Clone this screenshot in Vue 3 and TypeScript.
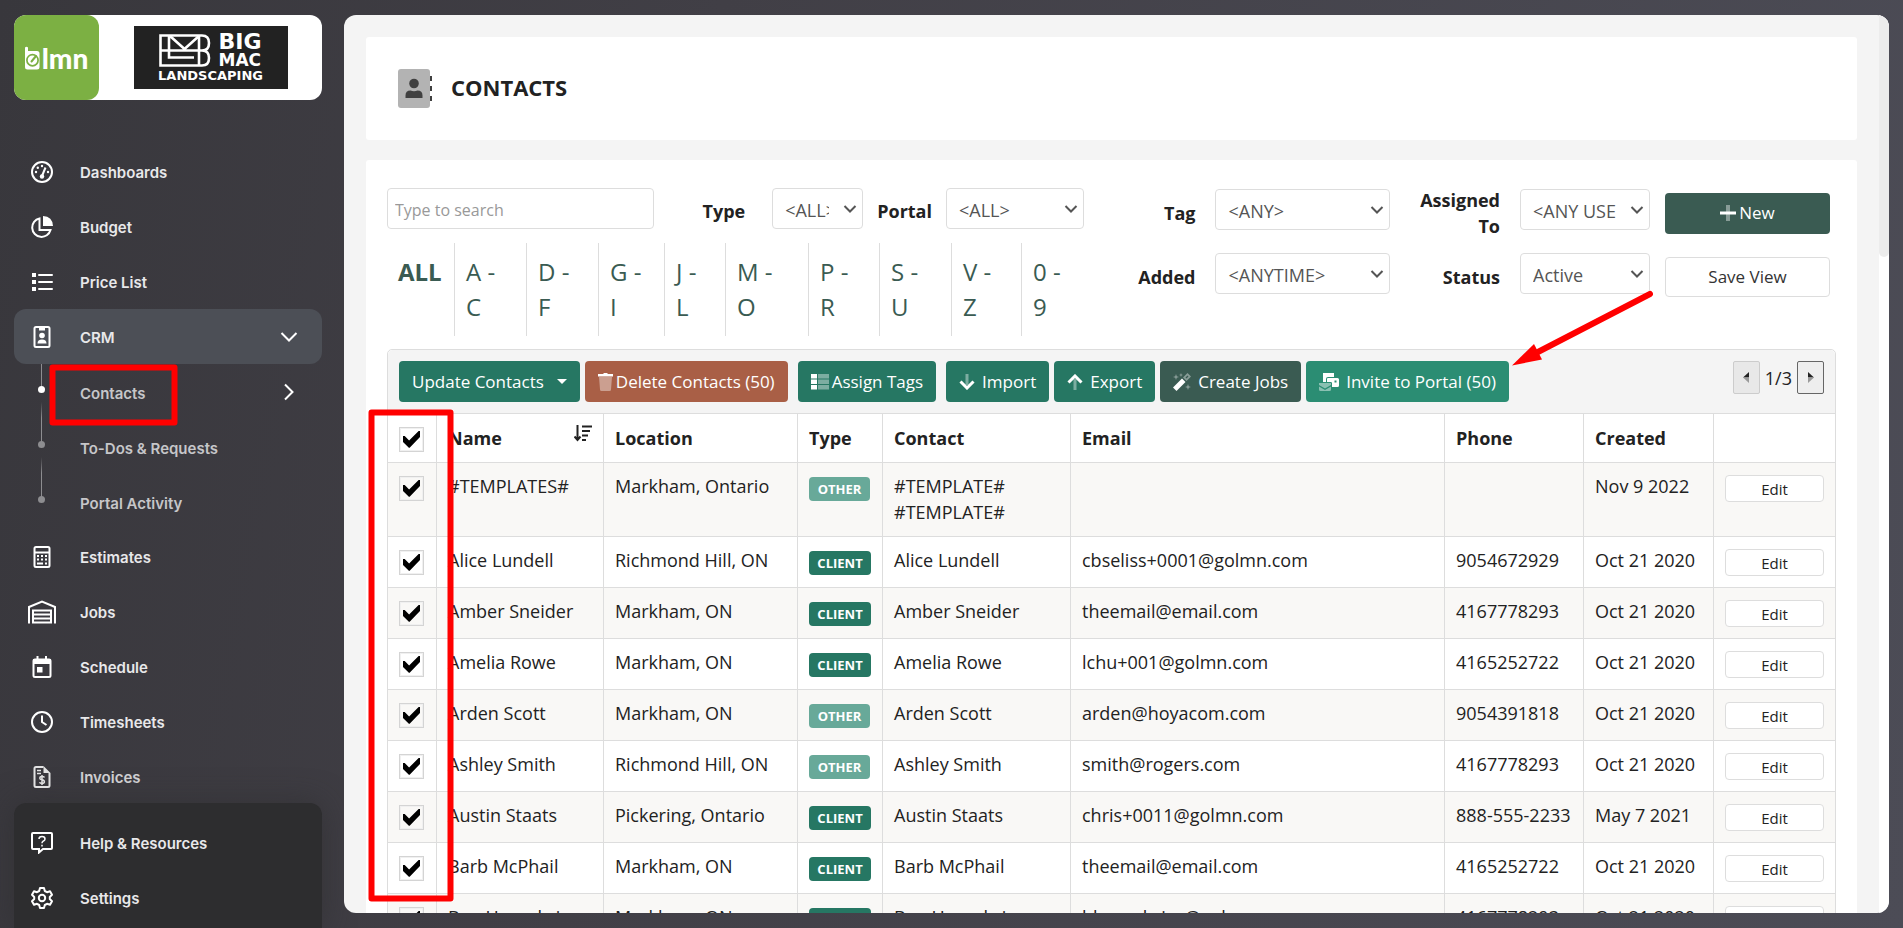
<script setup lang="ts">
import { computed, ref } from 'vue'

interface Contact {
  id: number
  name: string
  location: string
  type: 'OTHER' | 'CLIENT'
  contact: string[]
  email: string
  phone: string
  created: string
}

const contacts: Contact[] = [
  { id: 1, name: '#TEMPLATES#', location: 'Markham, Ontario', type: 'OTHER', contact: ['#TEMPLATE#', '#TEMPLATE#'], email: '', phone: '', created: 'Nov 9 2022' },
  { id: 2, name: 'Alice Lundell', location: 'Richmond Hill, ON', type: 'CLIENT', contact: ['Alice Lundell'], email: 'cbseliss+0001@golmn.com', phone: '9054672929', created: 'Oct 21 2020' },
  { id: 3, name: 'Amber Sneider', location: 'Markham, ON', type: 'CLIENT', contact: ['Amber Sneider'], email: 'theemail@email.com', phone: '4167778293', created: 'Oct 21 2020' },
  { id: 4, name: 'Amelia Rowe', location: 'Markham, ON', type: 'CLIENT', contact: ['Amelia Rowe'], email: 'lchu+001@golmn.com', phone: '4165252722', created: 'Oct 21 2020' },
  { id: 5, name: 'Arden Scott', location: 'Markham, ON', type: 'OTHER', contact: ['Arden Scott'], email: 'arden@hoyacom.com', phone: '9054391818', created: 'Oct 21 2020' },
  { id: 6, name: 'Ashley Smith', location: 'Richmond Hill, ON', type: 'OTHER', contact: ['Ashley Smith'], email: 'smith@rogers.com', phone: '4167778293', created: 'Oct 21 2020' },
  { id: 7, name: 'Austin Staats', location: 'Pickering, Ontario', type: 'CLIENT', contact: ['Austin Staats'], email: 'chris+0011@golmn.com', phone: '888-555-2233', created: 'May 7 2021' },
  { id: 8, name: 'Barb McPhail', location: 'Markham, ON', type: 'CLIENT', contact: ['Barb McPhail'], email: 'theemail@email.com', phone: '4165252722', created: 'Oct 21 2020' },
  { id: 9, name: 'Ben Humphries', location: 'Markham, ON', type: 'CLIENT', contact: ['Ben Humphries'], email: 'bhumphries@golmn.com', phone: '4167778293', created: 'Oct 21 2020' },
]

const selected = ref<number[]>(contacts.map((c) => c.id))
const allSelected = computed({
  get: () => selected.value.length === contacts.length,
  set: (on: boolean) => {
    selected.value = on ? contacts.map((c) => c.id) : []
  },
})

const letters: [string, string][] = [
  ['A -', 'C'], ['D -', 'F'], ['G -', 'I'], ['J -', 'L'], ['M -', 'O'],
  ['P -', 'R'], ['S -', 'U'], ['V -', 'Z'], ['0 -', '9'],
]
const search = ref('')
</script>

<template>
  <div class="app">
    <aside class="sidebar">
      <div class="brand">
        <div class="lmn">
          <svg width="15" height="24" viewBox="0 0 15 24" aria-hidden="true">
            <path d="M0 1.500Q1.500 0 3 1.500V5H12Q14.500 5 14.500 7.500V21Q14.500 23.500 12 23.500H2.500Q0 23.500 0 21Z" fill="#fff" />
            <circle cx="7.500" cy="14.200" r="5.600" fill="none" stroke="#7cb043" stroke-width="1.700" />
            <path d="M6.500 15.500L11 10" stroke="#7cb043" stroke-width="2" stroke-linecap="round" />
          </svg>
          <span>lmn</span>
        </div>
        <div class="company-box">
          <div class="company">
            <div class="company-top">
              <svg width="52" height="33" viewBox="0 0 52 33" fill="none" stroke="#fff" stroke-width="2.600" aria-hidden="true">
                <path d="M1.500 1.500H43Q50 1.500 50 9Q50 16.500 43 16.500Q50 16.500 50 24Q50 31.500 43 31.500H1.500Z" />
                <path d="M10 1.500V23.500H35M1.500 16.500H10M10 16.500H43M11 2L25.500 15L40 2M40 1.500V31.500" />
              </svg>
              <div class="company-words"><span class="big">BIG</span><span class="mac">MAC</span></div>
            </div>
            <span class="land">LANDSCAPING</span>
          </div>
        </div>
      </div>

      <nav class="nav">
        <a href="#" class="item">
          <svg viewBox="0 0 22 22"><circle cx="11" cy="11" r="10" class="s" /><circle cx="5" cy="11" r="1.200" /><circle cx="6.800" cy="6.800" r="1.200" /><circle cx="11" cy="5" r="1.200" /><circle cx="17" cy="11" r="1.200" /><circle cx="11" cy="15.500" r="2.200" /><path d="M11 15L14.500 6.500" class="s" /></svg>
          <span>Dashboards</span>
        </a>
        <a href="#" class="item">
          <svg viewBox="0 0 22 22"><path d="M8.500 2.500A9.300 9.300 0 1 0 19.500 14H8.500Z" class="s" /><path d="M12 0Q21.500 .5 22 10H12Z" /></svg>
          <span>Budget</span>
        </a>
        <a href="#" class="item">
          <svg viewBox="0 0 22 22"><path d="M1 2H5V6H1ZM1 9H5V13H1ZM1 16H5V20H1Z" /><path d="M8 4H21M8 11H21M8 18H21" class="s r" /></svg>
          <span>Price List</span>
        </a>
        <a href="#" class="item active">
          <svg viewBox="0 0 22 22"><rect x="3.500" y="1" width="15" height="20" rx="1.500" class="s" /><path d="M8 2H14V4.500H8Z" /><circle cx="11" cy="9.500" r="2.800" /><path d="M6.500 17.500Q6.500 13.500 11 13.500T15.500 17.500Z" /></svg>
          <span>CRM</span>
          <svg class="chev" viewBox="0 0 18 18"><path d="M1.500 5L9 12.500L16.500 5" class="s" /></svg>
        </a>
        <div class="subs">
          <a href="#" class="sub current">Contacts
            <svg class="chev" viewBox="0 0 18 18"><path d="M5 1.500L12.500 9L5 16.500" class="s" /></svg>
          </a>
          <a href="#" class="sub">To-Dos &amp; Requests</a>
          <a href="#" class="sub">Portal Activity</a>
        </div>
        <a href="#" class="item">
          <svg viewBox="0 0 22 22"><rect x="3.500" y="1" width="15" height="20" rx="1.500" class="s" /><path d="M4 6.500H18" class="s" /><path d="M6 9H8V11H6ZM10 9H12V11H10ZM14 9H16V11H14ZM6 12.500H8V14.500H6ZM10 12.500H12V14.500H10ZM14 12.500H16V14.500H14ZM6 16.500H12V18.500H6ZM14 16.500H16V18.500H14Z" /></svg>
          <span>Estimates</span>
        </a>
        <a href="#" class="item">
          <svg class="wide" viewBox="0 0 28 24"><path d="M1 23.500V7L14 1.500L27 7V23.500M5 23.500V10.500H23V23.500M6 14.500H22M6 18.500H22M6 22.500H22" class="s" /></svg>
          <span>Jobs</span>
        </a>
        <a href="#" class="item">
          <svg viewBox="0 0 22 22"><rect x="2.500" y="3.500" width="17" height="17.500" rx="1.500" class="s" /><path d="M2 3H20V8H2ZM5.500 0H7.500V3H5.500ZM14 0H16V3H14ZM6 11H11.500V16.500H6Z" /></svg>
          <span>Schedule</span>
        </a>
        <a href="#" class="item">
          <svg viewBox="0 0 22 22"><circle cx="11" cy="11" r="10" class="s" /><path d="M11 4.500V11L15.500 14" class="s" /></svg>
          <span>Timesheets</span>
        </a>
        <a href="#" class="item dim">
          <svg viewBox="0 0 22 22"><path d="M12.500 1H5Q3.500 1 3.500 2.500V19.500Q3.500 21 5 21H17Q18.500 21 18.500 19.500V7" class="s" /><path d="M12.500 0L19.500 7H12.500Z" /><path d="M6 4.500H10M6 7.500H10" class="t" /><path d="M13.500 11.500Q13 10.500 11 10.500Q8.800 10.500 8.800 12.200Q8.800 13.500 11 13.800Q13.400 14.200 13.400 15.700Q13.400 17.300 11 17.300Q9 17.300 8.500 16.200M11 9V19" class="t" /></svg>
          <span>Invoices</span>
        </a>
      </nav>

      <div class="foot">
        <a href="#" class="item">
          <svg viewBox="0 0 22 22"><path d="M2 1H20Q21 1 21 2V16Q21 17 20 17H12L8 20.500V17H2Q1 17 1 16V2Q1 1 2 1Z" class="s" /><path d="M8 7Q8 4.500 11 4.500T14 7Q14 8.500 12 9.300Q11 9.800 11 11.200M11 12.700V14.500" class="t" /></svg>
          <span>Help &amp; Resources</span>
        </a>
        <a href="#" class="item">
          <svg viewBox="0 0 22 22"><path d="M9 1H13L13.800 4L16 5.200L19 4.300L21 7.800L18.800 10V12L21 14.200L19 17.700L16 16.800L13.800 18L13 21H9L8.200 18L6 16.800L3 17.700L1 14.200L3.200 12V10L1 7.800L3 4.300L6 5.200L8.200 4Z" class="s j" /><circle cx="11" cy="11" r="3.200" class="s" /></svg>
          <span>Settings</span>
        </a>
      </div>
    </aside>

    <main class="panel">
      <div class="content">
        <header class="card title">
          <svg width="35" height="39" viewBox="0 0 35 39" aria-hidden="true">
            <rect width="32" height="39" rx="3" fill="#b3b3b3" />
            <path d="M32 7H34V12H32ZM32 17H34V22H32ZM32 27H34V32H32Z" fill="#404040" />
            <circle cx="16" cy="14.500" r="4.800" fill="#404040" />
            <path d="M7.500 29V26.500Q7.500 21.500 12.500 21.500Q16 23 19.500 21.500Q24.500 21.500 24.500 26.500V29Z" fill="#404040" />
          </svg>
          <h1>CONTACTS</h1>
        </header>

        <section class="card list">
          <div class="filters">
            <div class="left">
              <div class="row">
                <input v-model="search" class="search" type="text" placeholder="Type to search" aria-label="Search contacts" />
                <label for="type">Type</label>
                <div class="pick type">
                  <select id="type"><option>&lt;ALL&gt;</option></select>
                  <svg viewBox="0 0 14 10"><path d="M1.500 2L7 7.500L12.500 2" /></svg>
                </div>
                <label for="portal">Portal</label>
                <div class="pick portal">
                  <select id="portal"><option>&lt;ALL&gt;</option></select>
                  <svg viewBox="0 0 14 10"><path d="M1.500 2L7 7.500L12.500 2" /></svg>
                </div>
              </div>
              <div class="letters">
                <a href="#" class="all">ALL</a>
                <a v-for="l in letters" :key="l[0]" href="#"><span>{{ l[0] }}</span> <span>{{ l[1] }}</span></a>
              </div>
            </div>
            <div class="right">
              <label for="tag">Tag</label>
              <div class="pick">
                <select id="tag"><option>&lt;ANY&gt;</option></select>
                <svg viewBox="0 0 14 10"><path d="M1.500 2L7 7.500L12.500 2" /></svg>
              </div>
              <label for="user" class="narrow">Assigned To</label>
              <div class="pick">
                <select id="user"><option>&lt;ANY USER&gt;</option></select>
                <svg viewBox="0 0 14 10"><path d="M1.500 2L7 7.500L12.500 2" /></svg>
              </div>
              <button class="btn new" type="button">
                <svg width="16" height="16" viewBox="0 0 16 16"><path d="M6 0H10V16H6Z" opacity=".4" /><path d="M0 6.500H16V9.500H0Z" /></svg>New
              </button>
              <label for="added">Added</label>
              <div class="pick">
                <select id="added"><option>&lt;ANYTIME&gt;</option></select>
                <svg viewBox="0 0 14 10"><path d="M1.500 2L7 7.500L12.500 2" /></svg>
              </div>
              <label for="status">Status</label>
              <div class="pick">
                <select id="status"><option>Active</option></select>
                <svg viewBox="0 0 14 10"><path d="M1.500 2L7 7.500L12.500 2" /></svg>
              </div>
              <button class="btn save" type="button">Save View</button>
            </div>
          </div>

          <div class="grid">
            <div class="toolbar">
              <button class="btn wide-gap" type="button">Update Contacts
                <svg width="10" height="5" viewBox="0 0 10 5"><path d="M0 0H10L5 5Z" /></svg>
              </button>
              <button class="btn danger after" type="button">
                <svg width="15" height="18" viewBox="0 0 15 18"><path d="M1 4H14L13 16.500Q13 18 11.500 18H3.500Q2 18 2 16.500Z" opacity=".4" /><path d="M0 1H5L6 0H9L10 1H15V3.500H0Z" /></svg>Delete Contacts (50)
              </button>
              <button class="btn after" type="button">
                <svg width="18" height="16" viewBox="0 0 18 16"><path d="M0 0H6V4.500H0ZM0 5.500H6V10H0ZM0 11H6V15.500H0Z" /><path d="M7 0H18V4.500H7ZM7 5.500H18V10H7ZM7 11H18V15.500H7Z" opacity=".4" /></svg>Assign Tags
              </button>
              <button class="btn gap" type="button">
                <svg width="16" height="16" viewBox="0 0 16 16"><path d="M6.500 0H9.500V11H6.500Z" opacity=".4" /><path d="M1.500 7.500L8 14L14.500 7.500" class="arrow" /></svg>Import
              </button>
              <button class="btn gap" type="button">
                <svg width="16" height="16" viewBox="0 0 16 16"><path d="M6.500 5H9.500V16H6.500Z" opacity=".4" /><path d="M1.500 8.500L8 2L14.500 8.500" class="arrow" /></svg>Export
              </button>
              <button class="btn gap dark" type="button">
                <svg width="18" height="18" viewBox="0 0 18 18"><path d="M0 14.500L9 5.500L12.500 9L3.500 18Z" /><path d="M10 4.500L14.500 0L18 3.500L13.500 8Z M12.500 4.500L13.500 5.500L15.500 3.500L14.500 2.500Z" fill-rule="evenodd" opacity=".4" /><path d="M3 1L3.800 3.200L6 4L3.800 4.800L3 7L2.200 4.800L0 4L2.200 3.200ZM15 11L15.800 13.200L18 14L15.800 14.800L15 17L14.200 14.800L12 14L14.200 13.200ZM8 0L8.600 1.400L10 2L8.600 2.600L8 4L7.400 2.600L6 2L7.400 1.400Z" opacity=".4" /></svg>Create Jobs
              </button>
              <button class="btn gap light" type="button">
                <svg width="20" height="18" viewBox="0 0 20 18"><path d="M4 0H15V4H9Q7 4 7 6V9H4Z" /><path d="M9 5H18.500Q20 5 20 6.500V12.500Q20 14 18.500 14H13V10Q13 9 11.500 9H8V6Q8 5 9 5ZM15.500 7.500V9.500H17.500V7.500Z" fill-rule="evenodd" /><path d="M0 10H12V12L6 15.500L0 12ZM0 13.500L6 17L12 13.500V16.500Q12 18 10.500 18H1.500Q0 18 0 16.500Z" opacity=".45" /></svg>Invite to Portal (50)
              </button>
              <div class="pager">
                <button type="button" class="off" aria-label="Previous page"><svg width="6" height="11" viewBox="0 0 6 11"><path d="M6 0V5.500H0Z" fill="#222" /><path d="M6 11V5.500H0Z" fill="#999" /></svg></button>
                <span>1/3</span>
                <button type="button" aria-label="Next page"><svg width="6" height="11" viewBox="0 0 6 11"><path d="M0 0V5.500H6Z" fill="#222" /><path d="M0 11V5.500H6Z" fill="#999" /></svg></button>
              </div>
            </div>

            <table>
              <colgroup>
                <col class="c-check" /><col class="c-name" /><col class="c-loc" /><col class="c-type" /><col class="c-contact" />
                <col /><col class="c-phone" /><col class="c-created" /><col class="c-edit" />
              </colgroup>
              <thead>
                <tr>
                  <th class="check"><input v-model="allSelected" type="checkbox" aria-label="Select all contacts" /></th>
                  <th>
                    <div class="sortable">Name
                      <svg width="18" height="17" viewBox="0 0 18 17" fill="none" stroke="#222" stroke-width="2"><path d="M3.500 0V14M.5 11.500L3.500 15L6.500 11.500M8 1.500H18M8 6H16M8 10.500H14M8 15H12" /></svg>
                    </div>
                  </th>
                  <th>Location</th><th>Type</th><th>Contact</th><th>Email</th><th>Phone</th><th>Created</th><th></th>
                </tr>
              </thead>
              <tbody>
                <tr v-for="c in contacts" :key="c.id">
                  <td class="check"><input v-model="selected" :value="c.id" type="checkbox" :aria-label="'Select ' + c.name" /></td>
                  <td>{{ c.name }}</td>
                  <td>{{ c.location }}</td>
                  <td class="kind"><span class="badge" :class="{ other: c.type === 'OTHER' }">{{ c.type }}</span></td>
                  <td><div v-for="(line, i) in c.contact" :key="i">{{ line }}</div></td>
                  <td>{{ c.email }}</td>
                  <td>{{ c.phone }}</td>
                  <td>{{ c.created }}</td>
                  <td class="act"><button class="edit" type="button">Edit</button></td>
                </tr>
              </tbody>
            </table>
          </div>
        </section>
      </div>
      <div class="track"><div class="thumb"></div></div>
    </main>

    <svg class="marks" aria-hidden="true">
      <g fill="none" stroke="#f00" stroke-width="6" stroke-linejoin="round">
        <rect x="52.500" y="367.500" width="122" height="55" />
        <rect x="371.500" y="412.500" width="79" height="486" />
        <path d="M1650 294L1536 353" stroke-linecap="round" />
      </g>
      <path d="M1512 365.500L1534 344L1542 359.500Z" fill="#f00" />
    </svg>
  </div>
</template>

<style>
body {
  margin: 0;
}
</style>

<style scoped>
* {
  box-sizing: border-box;
}
.app {
  position: relative;
  display: flex;
  height: 100vh;
  overflow: hidden;
  background: linear-gradient(100deg, #38373c, #413f46 35%, #4c4c56);
  color: #222;
  font: 18px/26px "Open Sans", sans-serif;
}
a {
  color: inherit;
  text-decoration: none;
}
button,
input,
select {
  font-family: inherit;
}

/* Sidebar */
.sidebar {
  flex: none;
  display: flex;
  flex-direction: column;
  width: 344px;
  padding: 15px 22px 0 14px;
}
.brand {
  flex: none;
  display: flex;
  height: 85px;
  margin-bottom: 44px;
  border-radius: 12px;
  background: #fff;
}
.lmn {
  display: flex;
  justify-content: center;
  align-items: center;
  gap: 2px;
  width: 85px;
  border-radius: 12px;
  background: #7cb043;
  color: #fff;
  font: 900 28px/30px Lato, sans-serif;
}
.company-box {
  flex: 1;
  display: flex;
  justify-content: center;
  align-items: center;
}
.company {
  display: flex;
  flex-direction: column;
  align-items: center;
  justify-content: center;
  width: 154px;
  height: 63px;
  background: #222;
  color: #fff;
  font-family: "DejaVu Sans", sans-serif;
  font-weight: 700;
}
.company-top {
  display: flex;
  align-items: center;
  gap: 7px;
}
.company-words {
  display: flex;
  flex-direction: column;
}
.big {
  font-size: 22px;
  line-height: 20px;
}
.mac {
  font-size: 17px;
  line-height: 17px;
}
.land {
  font-size: 13px;
  line-height: 14px;
}
.nav {
  flex: 1;
  min-height: 0;
  overflow: hidden;
}
.item {
  display: flex;
  align-items: center;
  gap: 23px;
  height: 55px;
  padding: 0 24px 0 13px;
  border-radius: 12px;
  color: #e8e8ea;
  font: 600 15px/20px Inter, sans-serif;
}
.item span {
  padding-top: 2px;
}
.item svg,
.sub svg {
  flex: none;
  width: 30px;
  height: 22px;
  fill: #fff;
}
.item svg.wide {
  height: 24px;
}
.item .s,
.sub .s {
  fill: none;
  stroke: #fff;
  stroke-width: 2;
}
.item .j {
  stroke-linejoin: round;
}
.item .r {
  stroke-linecap: round;
}
.item .t {
  fill: none;
  stroke: #fff;
  stroke-width: 1.5;
}
.item.active {
  background: #4c4f56;
}
.item.dim {
  opacity: .85;
}
.item .chev,
.sub .chev {
  width: 18px;
  height: 18px;
  margin-left: auto;
}
.sub {
  position: relative;
  display: flex;
  align-items: center;
  height: 55px;
  padding: 4px 24px 0 66px;
  color: #c6c6c9;
  font: 600 15px/20px Inter, sans-serif;
}
.sub .chev {
  margin-bottom: 4px;
}
.sub::before {
  content: "";
  position: absolute;
  left: 27px;
  top: -17px;
  width: 1px;
  height: 40px;
  background: linear-gradient(transparent, #8d8d90 40%);
}
.sub.current::before {
  top: 0;
  height: 22px;
  background: #8d8d90;
}
.sub::after {
  content: "";
  position: absolute;
  left: 24px;
  top: 22px;
  width: 7px;
  height: 7px;
  border-radius: 50%;
  background: #8d8d90;
}
.sub.current::after {
  background: #fff;
}
.foot {
  flex: none;
  height: 125px;
  padding-top: 12px;
  border-radius: 12px 12px 0 0;
  background: #2d2d2f;
  box-shadow: 0 0 30px rgba(45, 45, 47, .6);
}

/* Main panel */
.panel {
  flex: 1;
  min-width: 0;
  display: flex;
  margin: 15px 14px 15px 0;
  border-radius: 12px;
  overflow: hidden;
  background: #f4f4f4;
}
.content {
  flex: 1;
  min-width: 0;
  padding: 22px 22px 0;
  overflow: hidden;
}
.track {
  flex: none;
  width: 10px;
  background: #fff;
}
.thumb {
  height: 27%;
  border-radius: 0 0 5px 5px;
  background: #ececec;
}
.card {
  border-radius: 3px;
  background: #fff;
}
.title {
  display: flex;
  align-items: center;
  gap: 18px;
  height: 103px;
  margin-bottom: 20px;
  padding: 0 32px;
}
h1 {
  margin: 0;
  padding-bottom: 4px;
  font-size: 22px;
  line-height: 30px;
  font-weight: 700;
}
.list {
  padding: 28px 21px 0;
}
.filters {
  display: flex;
  align-items: flex-start;
  margin-bottom: 13px;
}
.left {
  flex: 697 1 0;
}
.row {
  display: flex;
  align-items: center;
}
label {
  font-weight: 700;
  text-align: right;
}
.row label {
  padding-top: 4px;
}
.search {
  flex: 1;
  min-width: 0;
  height: 41px;
  margin-right: 48px;
  padding: 2px 7px 0;
  border: 1px solid #ddd;
  border-radius: 4px;
  color: #444;
  font-size: 16px;
}
.search::placeholder {
  color: #999;
}
.pick {
  position: relative;
}
.pick.type {
  width: 91px;
  margin: 0 14px 0 27px;
}
.pick.portal {
  width: 138px;
  margin-left: 14px;
}
.pick select {
  display: block;
  width: 100%;
  height: 41px;
  padding: 2px 33px 0 12px;
  border: 1px solid #ddd;
  border-radius: 4px;
  appearance: none;
  background: #fff;
  color: #555;
  font-size: 18px;
}
.pick svg {
  position: absolute;
  right: 6px;
  top: 16px;
  width: 14px;
  height: 10px;
  fill: none;
  stroke: #555;
  stroke-width: 2;
  pointer-events: none;
}
.letters {
  display: grid;
  grid-template-columns: 67fr 72fr 72fr 66fr 61fr 83fr 71fr 72fr 70fr 63fr;
  margin-top: 14px;
  color: #3a5b52;
  font-size: 24px;
  line-height: 35px;
}
.letters a {
  height: 93px;
  padding: 11px 0 0 11px;
  border-left: 1px solid #ddd;
}
.letters .all {
  border-left: 0;
  font-weight: 700;
}
.letters span {
  display: block;
}
.right {
  flex: 746 1 0;
  display: grid;
  grid-template-columns: 112fr 195px 110fr 150px 180px;
  grid-template-rows: 50px 50px;
  row-gap: 14px;
  align-items: center;
  padding-right: 6px;
}
.right .pick {
  align-self: start;
  margin: 1px 0 0 20px;
}
.right .btn {
  margin-left: 15px;
}
.right .narrow {
  justify-self: end;
  width: min-content;
}
.btn {
  display: inline-flex;
  align-items: center;
  justify-content: center;
  gap: 3px;
  height: 41px;
  padding: 0 13px;
  border: 0;
  border-radius: 4px;
  background: #267763;
  color: #fff;
  font-size: 17px;
  line-height: 24px;
  white-space: nowrap;
}
.btn svg {
  fill: #fff;
}
.btn .arrow {
  fill: none;
  stroke: #fff;
  stroke-width: 3;
}
.btn.gap {
  gap: 7px;
}
.btn.wide-gap {
  gap: 13px;
}
.btn.danger {
  background: #a95f46;
}
.btn.after {
  margin-right: 5px;
}
.btn.dark,
.btn.new {
  background: #3a5b52;
}
.btn.light {
  background: #2b8d73;
}
.btn.save {
  height: 40px;
  border: 1px solid #ddd;
  background: #fff;
  color: #333;
}

/* Contact grid */
.grid {
  border: 1px solid #ddd;
  border-radius: 5px 5px 0 0;
  background: #fff;
}
.toolbar {
  display: flex;
  align-items: center;
  gap: 5px;
  padding: 11px;
  background: #f4f4f4;
  border-radius: 5px 5px 0 0;
}
.pager {
  display: flex;
  align-self: flex-start;
  align-items: center;
  gap: 5px;
  margin-left: auto;
}
.pager button {
  display: flex;
  align-items: center;
  justify-content: center;
  width: 27px;
  height: 33px;
  padding: 0;
  border: 1px solid #666;
  border-radius: 2px;
  background: #eee;
}
.pager button.off {
  border-color: #ccc;
  background: #e8e8e8;
}
table {
  width: 100%;
  table-layout: fixed;
  border-collapse: separate;
  border-spacing: 0;
}
.c-check { width: 48px; }
.c-name { width: 167px; }
.c-loc { width: 194px; }
.c-type { width: 85px; }
.c-contact { width: 188px; }
.c-phone { width: 139px; }
.c-created { width: 130px; }
.c-edit { width: 122px; }
th,
td {
  height: 51px;
  padding: 10px 0 11px 11px;
  border-top: 1px solid #ddd;
  border-left: 1px solid #ddd;
  text-align: left;
  vertical-align: top;
  white-space: nowrap;
}
th {
  height: 49px;
  padding: 11px 0 0 11px;
  font-weight: 700;
}
th:first-child,
td:first-child {
  border-left: 0;
}
tbody tr:nth-child(odd) {
  background: #f9f8f6;
}
.check {
  padding: 13px 0 0 11px;
}
.check input {
  display: block;
  width: 25px;
  height: 25px;
  margin: 0;
  border: 1px solid #d4d4d4;
  appearance: none;
  background: transparent;
  box-shadow: inset 0 0 0 1px #f0f0f0;
}
.check input:checked::before {
  content: "";
  display: block;
  width: 17px;
  height: 17px;
  margin: 3px;
  background: #000;
  clip-path: polygon(0 30%, 10% 30%, 36% 56%, 92% 0, 100% 0, 100% 36%, 42% 96%, 36% 100%, 30% 94%, 0 64%);
}
.sortable {
  display: flex;
  justify-content: space-between;
  padding-right: 11px;
}
.kind {
  padding: 14px 0 0 11px;
}
.badge {
  display: block;
  width: 62px;
  height: 24px;
  border-radius: 4px;
  background: #267763;
  color: #fff;
  font-size: 13px;
  font-weight: 700;
  line-height: 25px;
  text-align: center;
}
.badge.other {
  width: 61px;
  background: #68a999;
}
.act {
  padding: 12px 11px 0;
}
.edit {
  display: block;
  width: 100%;
  height: 27px;
  padding: 0;
  border: 1px solid #ddd;
  border-radius: 4px;
  background: #fff;
  color: #222;
  font-size: 15px;
  line-height: 24px;
}
.marks {
  position: absolute;
  left: 0;
  top: 0;
  width: 100%;
  height: 100%;
  pointer-events: none;
}
</style>
